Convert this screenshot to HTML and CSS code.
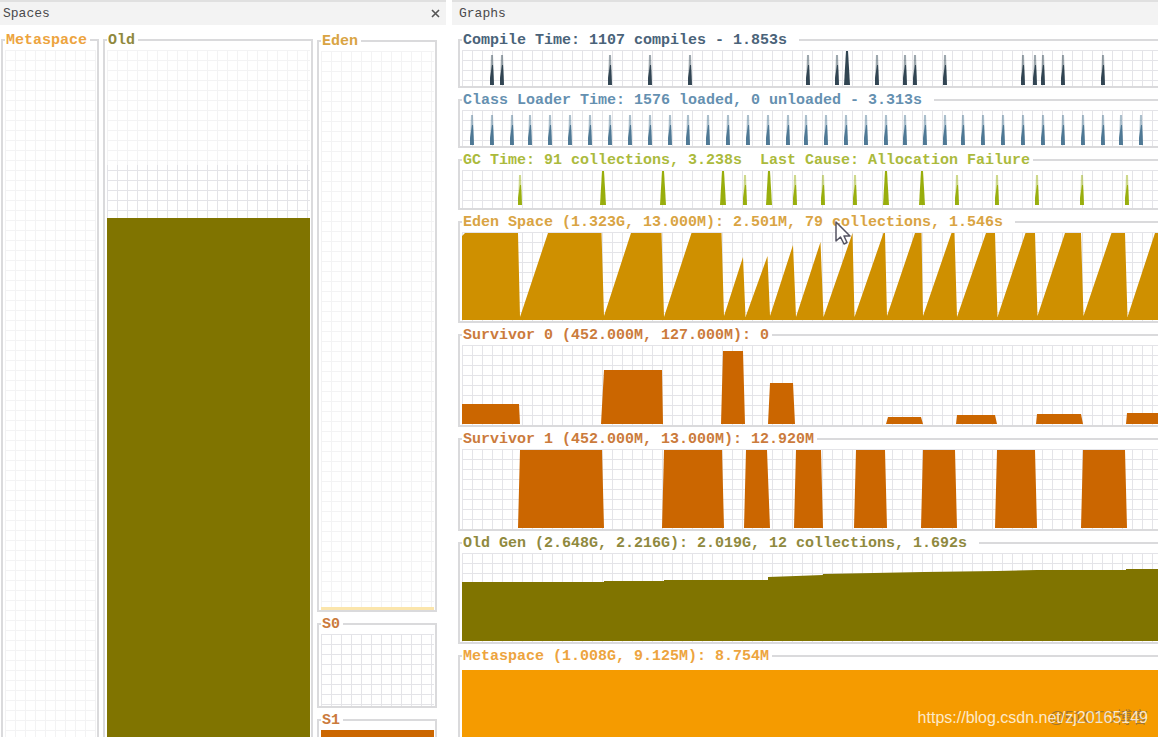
FILE: index.html
```html
<!DOCTYPE html>
<html lang="en">
<head>
<meta charset="utf-8">
<title>Visual GC</title>
<link rel="stylesheet" href="styles.css">
</head>
<body>
<main class="workspace">
  <section class="panel">
    <header class="panel-head">
      <h2 class="panel-title">Spaces</h2>
      <button class="close" type="button" aria-label="Close Spaces">
        <svg width="9" height="9" viewBox="0 0 9 9" aria-hidden="true"><path d="M1 1L8 8M8 1L1 8" stroke="currentColor" stroke-width="1.6" fill="none"/></svg>
      </button>
    </header>
    <div class="spaces">
      <fieldset class="box box-open meta">
        <legend>Metaspace</legend>
        <div class="plot grid-light"></div>
      </fieldset>
      <fieldset class="box box-open old">
        <legend>Old</legend>
        <div class="plot old-stack">
          <div class="old-reserved grid-light"></div>
          <div class="old-committed grid"></div>
          <div class="old-used"></div>
        </div>
      </fieldset>
      <div class="young">
        <fieldset class="box eden">
          <legend>Eden</legend>
          <div class="plot grid-light eden-level"></div>
        </fieldset>
        <fieldset class="box survivor">
          <legend>S0</legend>
          <div class="plot grid"></div>
        </fieldset>
        <fieldset class="box box-open survivor">
          <legend>S1</legend>
          <div class="plot survivor-used"></div>
        </fieldset>
      </div>
    </div>
  </section>

  <section class="panel">
    <header class="panel-head">
      <h2 class="panel-title">Graphs</h2>
    </header>
    <div class="graphs">
      <fieldset class="box graph compile">
        <legend class="roomy">Compile Time: 1107 compiles - 1.853s</legend>
        <svg class="chart chart-short grid" id="compile" viewBox="0 0 696 36" preserveAspectRatio="none"></svg>
      </fieldset>
      <fieldset class="box graph loader">
        <legend class="roomy">Class Loader Time: 1576 loaded, 0 unloaded - 3.313s</legend>
        <svg class="chart chart-short grid" id="loader" viewBox="0 0 696 36" preserveAspectRatio="none"></svg>
      </fieldset>
      <fieldset class="box graph gc">
        <legend>GC Time: 91 collections, 3.238s&nbsp; Last Cause: Allocation Failure</legend>
        <svg class="chart chart-gc grid" id="gc" viewBox="0 0 696 38" preserveAspectRatio="none"></svg>
      </fieldset>
      <fieldset class="box graph eden">
        <legend class="roomy">Eden Space (1.323G, 13.000M): 2.501M, 79 collections, 1.546s</legend>
        <svg class="chart chart-tall grid" viewBox="0 0 696 89" preserveAspectRatio="none">
          <path class="fill-eden" d="M0 88V4L3 1H56L58 85L86 1H139.500L142 84L169 1H199.500L202 85L229.500 1H259.500L262 84L281 25L283.500 85L305.500 24L308 84L331 13L334 85L358.500 10L361.500 85L390.500 1L392.500 85L421.500 1H423L425 84L453 1H459.500L461 84L489.500 1H492.500L495 85L524 1H533L535.500 85L563.500 1H573L575.500 84L603 1H619L621.500 84L649.500 1H663L665.500 85L693 1H696V88Z"/>
        </svg>
      </fieldset>
      <fieldset class="box graph survivor">
        <legend>Survivor 0 (452.000M, 127.000M): 0</legend>
        <svg class="chart chart-mid grid" viewBox="0 0 696 80" preserveAspectRatio="none">
          <path class="fill-survivor" d="M0 79V59H57L58 79ZM139 79L142 25H200L201 79ZM259 79L261 6H281L283 79ZM306 79L308 38H331L333 79ZM424 79L426 72H459L461 79ZM494 79L495 70H533L535 79ZM574 79L575 69H619L621 79ZM664 79L665 68H696V79Z"/>
        </svg>
      </fieldset>
      <fieldset class="box graph survivor">
        <legend>Survivor 1 (452.000M, 13.000M): 12.920M</legend>
        <svg class="chart chart-mid grid" viewBox="0 0 696 80" preserveAspectRatio="none">
          <path class="fill-survivor" d="M56 79L58 1H140L142 79ZM200 79L202 1H260L262 79ZM282 79L284 1H305L308 79ZM332 79L334 1H359L361 79ZM392 79L394 1H423L425 79ZM459 79L461 1H493L495 79ZM533 79L535 1H573L575 79ZM619 79L621 1H663L665 79Z"/>
        </svg>
      </fieldset>
      <fieldset class="box graph old">
        <legend class="roomy">Old Gen (2.648G, 2.216G): 2.019G, 12 collections, 1.692s</legend>
        <svg class="chart chart-tall grid" viewBox="0 0 696 89" preserveAspectRatio="none">
          <path class="fill-old" d="M0 88V29H142V28H202V27H306V24L334 23L361 22V21L462 19L535 18L575 17L664 17V16H696V88Z"/>
        </svg>
      </fieldset>
      <fieldset class="box box-open graph meta">
        <legend>Metaspace (1.008G, 9.125M): 8.754M</legend>
        <div class="plot meta-used"></div>
      </fieldset>
    </div>
  </section>
</main>

<svg class="pointer" width="16" height="25" viewBox="0 0 16 25" aria-hidden="true">
  <path d="M1 1V20L5.500 16L9 23L12 21.500L9 15H15Z" fill="#fff" stroke="#555463" stroke-width="1.500" stroke-linejoin="round"/>
</svg>
<p class="mark mark-back">@51CTO博客</p>
<p class="mark mark-front">https://blog.csdn.net/zj20165149</p>
<script src="charts.js"></script>
</body>
</html>
```
FILE: styles.css
```css
* {
  box-sizing: border-box;
}

body {
  margin: 0;
  background: #fff;
  font-family: "Liberation Mono", monospace;
}

.workspace {
  display: grid;
  grid-template-columns: 446fr 706fr;
  gap: 6px;
  height: 100vh;
  overflow: hidden;
}

.panel {
  display: flex;
  flex-direction: column;
  min-width: 0;
  min-height: 0;
}

.panel-head {
  display: flex;
  flex: none;
  align-items: center;
  justify-content: space-between;
  height: 25px;
  padding: 0 4px 0 3px;
  background: #f3f3f3;
  border-top: 2px solid #e0e0e0;
}

.panel:last-child .panel-head {
  padding-left: 7px;
}

.panel-title {
  margin: 0;
  color: #4a4a4c;
  font-size: 13px;
  font-weight: 400;
  line-height: 16px;
}

.close {
  display: flex;
  padding: 2px;
  border: 0;
  background: none;
  color: #555;
}

.spaces {
  display: grid;
  flex: 1;
  grid-template-columns: 98fr 210fr 120fr;
  gap: 4px;
  min-height: 0;
  padding: 7px 9px 0 1px;
}

.young {
  display: grid;
  grid-template-rows: minmax(0, 579fr) minmax(0, 92fr) minmax(0, 25fr);
  gap: 4px;
  min-width: 0;
  min-height: 0;
  padding-top: 1px;
}

.graphs {
  display: flex;
  flex: 1;
  flex-direction: column;
  gap: 4px;
  min-height: 0;
  padding: 7px 0 0 6px;
}

.box {
  display: flex;
  flex-direction: column;
  min-width: 0;
  min-height: 0;
  margin: 0;
  padding: 2px 1px 0 2px;
  border: 2px solid #dadadc;
}

.box-open {
  border-bottom: 0;
}

.graph {
  padding-right: 0;
  border-right: 0;
}

.graph.box-open {
  flex: 1;
  padding-top: 6px;
}

legend {
  padding: 2px 3px 0 1px;
  font-size: 15px;
  font-weight: 700;
  line-height: 14px;
  white-space: nowrap;
}

legend.roomy {
  padding-right: 12px;
}

.compile { color: #4a6379; }
.loader { color: #6590b0; }
.gc { color: #abba3c; }
.eden { color: #d9a443; }
.survivor { color: #cb7b3c; }
.old { color: #8f893e; }
.meta { color: #eda43e; }

.plot {
  flex: 1;
  min-height: 0;
}

.grid,
.grid-light {
  background-image:
    linear-gradient(to right, var(--line) 1px, transparent 1px),
    linear-gradient(to bottom, var(--line) 1px, transparent 1px);
  background-size: 10px 10px;
}

.grid { --line: #e4e4e8; }
.grid-light { --line: #f3f3f4; }

.old-stack {
  display: flex;
  flex-direction: column;
}

.old-reserved { flex: 115 1 0; }
.old-committed { flex: 53 1 0; background-position: 0 5px; }
.old-used { flex: 519 1 0; background: #807400; }

.eden-level { border-bottom: 3px solid #fbe5ab; }
.survivor-used { background: #cb6600; }
.meta-used { background: #f59b00; }

.chart {
  display: block;
  width: 100%;
}

.chart-short { height: 36px; }
.chart-gc { height: 38px; }
.chart-mid { height: 80px; }
.chart-tall { height: 89px; }

.fill-eden { fill: #cf9000; }
.fill-survivor { fill: #cb6600; }
.fill-old { fill: #807400; }

#compile { color: #263b49; }
#loader { color: #45718f; }
#gc { color: #93aa00; }

.pointer {
  position: absolute;
  top: 221px;
  left: 835px;
}

.mark {
  position: absolute;
  right: 10px;
  bottom: 9px;
  margin: 0;
  font-family: "Liberation Sans", "Noto Sans CJK SC", sans-serif;
  font-size: 16px;
  line-height: 20px;
}

.mark-back { color: rgba(120, 100, 70, 0.7); }
.mark-front { color: rgba(255, 255, 255, 0.8); }
```
FILE: charts.js
```js
const SVG_NS = "http://www.w3.org/2000/svg";

function addShape(svg, d, opacity) {
  const path = document.createElementNS(SVG_NS, "path");
  path.setAttribute("d", d);
  path.setAttribute("fill", "currentColor");
  path.setAttribute("fill-opacity", opacity);
  svg.appendChild(path);
}

// Each spike fades towards its tip; tall ones are wider and solid.
function drawSpikes(id, small, tall) {
  const svg = document.getElementById(id);
  for (const x of small) {
    addShape(svg, `M${x - 2} 35L${x - 1} 5H${x + 1}L${x + 2} 35Z`, 0.45);
    addShape(svg, `M${x - 2} 35V28L${x} 15H${x + 1}L${x + 2} 35Z`, 0.9);
  }
  for (const x of tall) {
    addShape(svg, `M${x - 3} 35L${x - 1} 1H${x + 1}L${x + 3} 35Z`, 0.95);
  }
}

drawSpikes("compile",
  [30, 40, 148, 188, 228, 346, 375, 415, 443, 453, 483, 561, 573, 581, 601, 641],
  [385]);

drawSpikes("loader",
  [10, 30, 50, 68, 88, 108, 128, 148, 168, 188, 208, 226, 246, 266, 286, 306, 326, 344,
   364, 384, 404, 424, 443, 463, 483, 501, 521, 541, 561, 581, 601, 621, 641, 659, 679],
  []);

drawSpikes("gc",
  [58, 283, 333, 361, 393, 495, 535, 575, 620, 665],
  [141, 201, 261, 307, 424, 460]);
```
